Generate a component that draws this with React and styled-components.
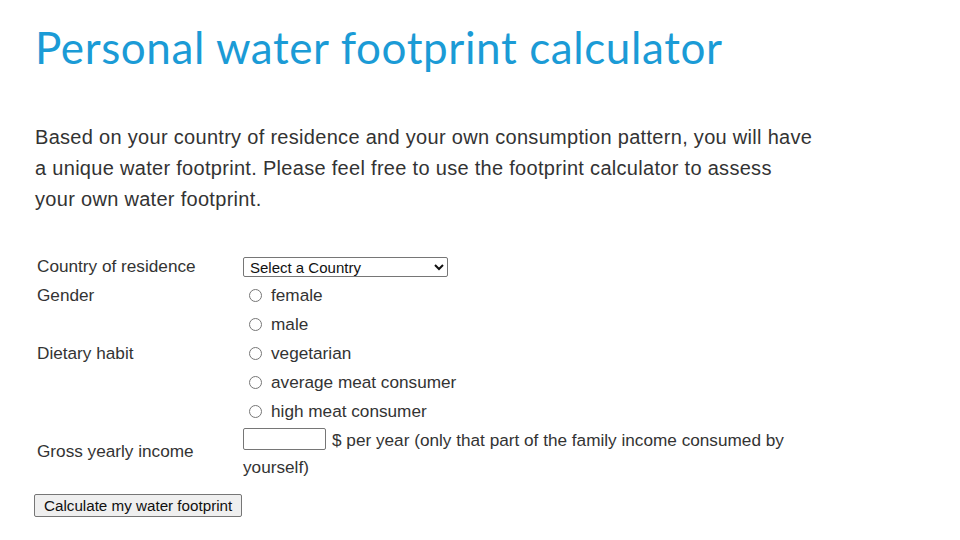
import React from 'react';
import styled, { createGlobalStyle } from 'styled-components';

const Global = createGlobalStyle`
  html, body {
    margin: 0;
    padding: 0;
    background: #ffffff;
  }
  body {
    font-family: "Liberation Sans", Arial, sans-serif;
    color: #333333;
  }
`;

const Page = styled.div`
  width: 960px;
  height: 540px;
  overflow: hidden;
  padding: 21px 0 0 35px;
  box-sizing: border-box;
`;

const Title = styled.h1`
  margin: 0;
  font-family: "Lato", "Open Sans", sans-serif;
  font-weight: 400;
  font-size: 44px;
  line-height: 52px;
  color: #1b9bd6;
  letter-spacing: 0.6px;
`;

const Intro = styled.p`
  margin: 49px 0 0;
  font-size: 20px;
  letter-spacing: 0.3px;
  line-height: 31px;
  color: #333333;
  white-space: nowrap;
`;

const Form = styled.form`
  margin-top: 37px;
  font-size: 17.2px;
  color: #333333;
`;

const Grid = styled.div`
  display: grid;
  grid-template-columns: 208px 560px;
  grid-auto-rows: 29px;
  align-items: center;
`;

const Label = styled.div`
  padding-left: 2px;
  padding-bottom: ${(p) => (p.$lift ? '6px' : '0')};
`;

const Cell = styled.div`
  display: flex;
  align-items: center;
`;

const Select = styled.select`
  width: 205px;
  height: 20px;
  font-family: "Liberation Sans", Arial, sans-serif;
  font-size: 15px;
  color: #111;
  border: 1px solid #767676;
  border-radius: 2px;
  background: #fff;
  padding: 0 2px;
`;

const Radio = styled.input.attrs({ type: 'radio' })`
  width: 13px;
  height: 13px;
  margin: 0 9px 0 6px;
  accent-color: #767676;
`;

const IncomeRow = styled.div`
  display: grid;
  grid-template-columns: 208px 560px;
  align-items: center;
  margin-top: 1px;
`;

const IncomeCell = styled.div`
  line-height: 27px;
`;

const NumberInput = styled.input.attrs({ type: 'text' })`
  width: 83px;
  height: 22px;
  box-sizing: border-box;
  border: 1px solid #767676;
  border-radius: 2px;
  margin: 1px 6px 0 0;
  padding: 0;
  vertical-align: top;
`;

const Button = styled.button`
  margin-top: 13px;
  margin-left: -1px;
  height: 23px;
  padding: 0 9px;
  font-family: "Liberation Sans", Arial, sans-serif;
  font-size: 15.2px;
  color: #111;
  background: #efefef;
  border: 1px solid #767676;
  border-radius: 2px;
`;

const gender = ['female', 'male'];
const diet = ['vegetarian', 'average meat consumer', 'high meat consumer'];

export default function App() {
  return (
    <Page>
      <Global />
      <Title>Personal water footprint calculator</Title>
      <Intro>
        Based on your country of residence and your own consumption pattern, you will have
        <br />
        a unique water footprint. Please feel free to use the footprint calculator to assess
        <br />
        your own water footprint.
      </Intro>
      <Form onSubmit={(e) => e.preventDefault()}>
        <Grid>
          <Label>Country of residence</Label>
          <Cell>
            <Select defaultValue="">
              <option value="">Select a Country</option>
            </Select>
          </Cell>
          {gender.map((g, i) => (
            <React.Fragment key={g}>
              <Label>{i === 0 ? 'Gender' : ''}</Label>
              <Cell>
                <Radio name="gender" />
                {g}
              </Cell>
            </React.Fragment>
          ))}
          {diet.map((d, i) => (
            <React.Fragment key={d}>
              <Label>{i === 0 ? 'Dietary habit' : ''}</Label>
              <Cell>
                <Radio name="diet" />
                {d}
              </Cell>
            </React.Fragment>
          ))}
        </Grid>
        <IncomeRow>
          <Label $lift>Gross yearly income</Label>
          <IncomeCell>
            <NumberInput />$ per year (only that part of the family income consumed by yourself)
          </IncomeCell>
        </IncomeRow>
        <Button type="button">Calculate my water footprint</Button>
      </Form>
    </Page>
  );
}
